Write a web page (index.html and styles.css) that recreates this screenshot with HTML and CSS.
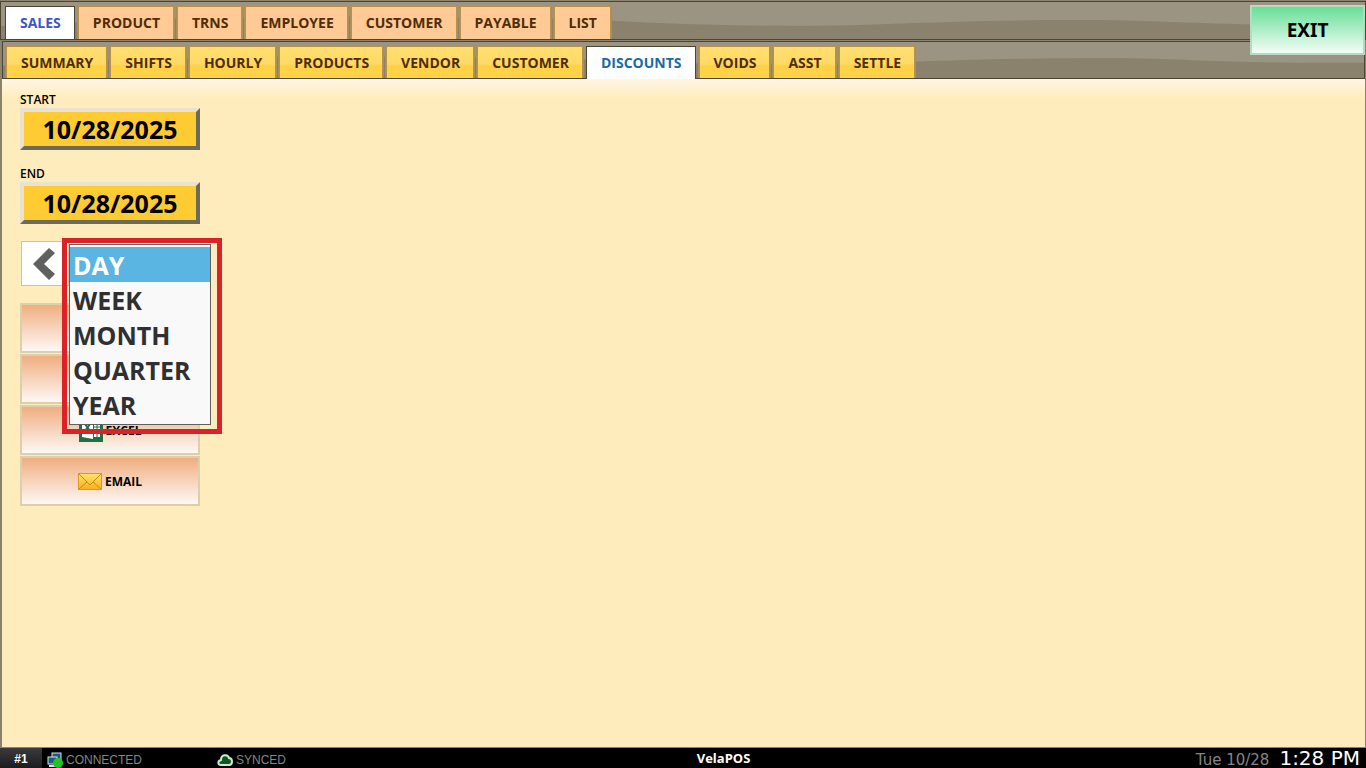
FILE: index.html
```html
<!DOCTYPE html>
<html lang="en">
<head>
    <meta charset="UTF-8">
    <meta name="viewport" content="width=device-width, initial-scale=1.0">
    <title>VelaPOS - Discounts</title>
    <link rel="stylesheet" href="styles.css">
</head>
<body>
    <header class="header">
        <nav class="tab-bar main-tabs">
            <svg class="wave" viewBox="0 0 1366 40" preserveAspectRatio="none" aria-hidden="true">
                <path d="M0 26 C200 14 400 14 608 20 C700 26 800 27 880 24 C980 20 1080 18 1160 21 C1230 24 1300 26 1366 24 V40 H0 Z"/>
            </svg>
            <a href="#" class="tab active">SALES</a>
            <a href="#" class="tab">PRODUCT</a>
            <a href="#" class="tab">TRNS</a>
            <a href="#" class="tab">EMPLOYEE</a>
            <a href="#" class="tab">CUSTOMER</a>
            <a href="#" class="tab">PAYABLE</a>
            <a href="#" class="tab">LIST</a>
        </nav>
        <nav class="tab-bar sub-tabs">
            <svg class="wave" viewBox="0 0 1366 40" preserveAspectRatio="none" aria-hidden="true">
                <path d="M0 26 C200 14 400 14 608 20 C700 26 800 25 914 22 C980 19 1080 17 1140 18 C1200 20 1260 24 1366 23 V40 H0 Z"/>
            </svg>
            <a href="#" class="tab">SUMMARY</a>
            <a href="#" class="tab">SHIFTS</a>
            <a href="#" class="tab">HOURLY</a>
            <a href="#" class="tab">PRODUCTS</a>
            <a href="#" class="tab">VENDOR</a>
            <a href="#" class="tab">CUSTOMER</a>
            <a href="#" class="tab active">DISCOUNTS</a>
            <a href="#" class="tab">VOIDS</a>
            <a href="#" class="tab">ASST</a>
            <a href="#" class="tab">SETTLE</a>
        </nav>
        <button class="exit-button" type="button">EXIT</button>
    </header>

    <main class="content">
        <form class="filters">
            <div class="field">
                <label for="start-date">START</label>
                <input type="text" id="start-date" class="date-input" value="10/28/2025">
            </div>
            <div class="field">
                <label for="end-date">END</label>
                <input type="text" id="end-date" class="date-input" value="10/28/2025">
            </div>

            <div class="period">
                <button class="period-prev" type="button" aria-label="Previous period">
                    <svg width="22" height="32" viewBox="0 0 22 32" aria-hidden="true">
                        <path d="M0 16 L16 0 L22 5 L11 16 L22 26 L16 32 Z" fill="#606060"/>
                    </svg>
                </button>
                <div class="period-menu">
                    <select class="period-list" size="5" aria-label="Period">
                        <option selected>DAY</option>
                        <option>WEEK</option>
                        <option>MONTH</option>
                        <option>QUARTER</option>
                        <option>YEAR</option>
                    </select>
                </div>
            </div>

            <div class="actions">
                <button class="action-button" type="button" aria-label="View"></button>
                <button class="action-button" type="button" aria-label="Print"></button>
                <button class="action-button" type="button">
                    <svg width="24" height="24" viewBox="0 0 24 24" aria-hidden="true">
                        <rect width="24" height="24" fill="#1e7145"/>
                        <path d="M3 5 L14 3 V21 L3 19 Z" fill="#fff"/>
                        <path d="M15 5 H21 V19 H15 Z" fill="#fff"/>
                        <path d="M15 9 H21 M15 12 H21 M15 15 H21 M18 5 V19" stroke="#1e7145"/>
                        <path d="M6 6 L11 13 M11 6 L6 13" stroke="#1e7145" stroke-width="2"/>
                    </svg>
                    EXCEL
                </button>
                <button class="action-button" type="button">
                    <svg width="24" height="17" viewBox="0 0 24 17" aria-hidden="true">
                        <defs>
                            <linearGradient id="mail" x1="0" y1="0" x2="0" y2="1">
                                <stop offset="0" stop-color="#ffe36a"/>
                                <stop offset="1" stop-color="#f9b01c"/>
                            </linearGradient>
                        </defs>
                        <rect x="0.5" y="0.5" width="23" height="16" fill="url(#mail)" stroke="#d99a22"/>
                        <path d="M1 1 L12 12 L23 1 M1 16 L9 9 M23 16 L15 9" fill="none" stroke="#c98a18"/>
                    </svg>
                    EMAIL
                </button>
            </div>
        </form>
    </main>

    <footer class="status-bar">
        <div class="status-left">
            <span class="station">#1</span>
            <span class="status connection">
                <svg width="16" height="16" viewBox="0 0 16 16" aria-hidden="true">
                    <rect x="5" y="1" width="9" height="7" fill="#1d5a7c" stroke="#d5e6ee"/>
                    <rect x="1" y="5" width="9" height="7" fill="#1d5a7c" stroke="#d5e6ee"/>
                    <path d="M2 14 H9" stroke="#d5e6ee" stroke-width="2"/>
                    <circle cx="11" cy="11" r="5" fill="#22c322"/>
                </svg>
                CONNECTED
            </span>
            <span class="status">
                <svg width="16" height="12" viewBox="0 0 16 12" aria-hidden="true">
                    <path d="M4 11 C1 11 0 7 4 6 C4 0 11 0 12 4 C16 4 16 11 12 11 Z" fill="#0c5a1c" stroke="#cfe8d0" stroke-width="2"/>
                </svg>
                SYNCED
            </span>
        </div>
        <div class="brand">VelaPOS</div>
        <div class="clock">
            <span class="date">Tue 10/28</span>
            <span class="time">1:28 PM</span>
        </div>
    </footer>
</body>
</html>
```

FILE: styles.css
```css
* {
    margin: 0;
    padding: 0;
    box-sizing: border-box;
}

body {
    display: flex;
    flex-direction: column;
    min-height: 100vh;
    font-family: 'Open Sans', sans-serif;
    background: #feecbc;
    color: #000;
}

/* Tabs */
.header {
    position: relative;
    z-index: 1;
    padding-top: 1px;
    background: #8d8470;
}

.tab-bar {
    position: relative;
    display: flex;
    gap: 3px;
    height: 39px;
    padding: 4px 4px 0;
    border: 1px solid #4c4534;
    background: #9c9482;
}

.sub-tabs {
    height: 38px;
    margin: 1px 1px 0 2px;
    padding-left: 3px;
}

.wave {
    position: absolute;
    inset: 0;
    width: 100%;
    height: 100%;
    fill: #8b826e;
}

.tab {
    position: relative;
    display: flex;
    align-items: center;
    padding: 0 13px 0 14px;
    border: 1px solid #b8924a;
    border-bottom: none;
    box-shadow: 1px 0 #a8905a, -1px 0 #a8905a;
    font-size: 14px;
    font-weight: 700;
    color: #4f2d06;
    text-decoration: none;
}

.main-tabs .tab {
    padding-bottom: 1px;
    background: #ffca95;
}

.sub-tabs .tab {
    background: linear-gradient(#ffdf6f 0%, #ffd966 55%, #ffd145 60%, #ffd34a 100%);
}

.main-tabs .tab.active,
.sub-tabs .tab.active {
    background: #fff;
    border-color: #4c4534;
    box-shadow: none;
    color: #1a6aa5;
}

.main-tabs .tab.active {
    color: #3d55c8;
}

.sub-tabs .tab.active {
    margin-bottom: -1px;
    padding-bottom: 1px;
}

.exit-button {
    position: absolute;
    top: 5px;
    right: 1px;
    width: 115px;
    height: 50px;
    border: 2px solid #b5dcc0;
    background: linear-gradient(#68de98, #f4fdf6);
    font: 700 19px 'Noto Sans', sans-serif;
    color: #000;
    cursor: pointer;
}

/* Report filters */
.content {
    flex: 1;
    padding: 13px 18px;
    border: solid #8b826e;
    border-width: 0 1px 1px 2px;
    background: linear-gradient(#fff6e2, #feecbc 20px);
}

.filters {
    width: 180px;
}

.field {
    display: flex;
    flex-direction: column;
    margin-bottom: 16px;
}

.field label {
    height: 16px;
    font-size: 12px;
    font-weight: 600;
    line-height: 16px;
}

.date-input {
    width: 100%;
    height: 42px;
    border: 4px solid;
    border-color: #e9e2d2 #6e6a58 #6e6a58 #e9e2d2;
    background: #ffcb32;
    font: 700 25px 'Open Sans', sans-serif;
    text-align: center;
    color: #000;
}

.period {
    position: relative;
    height: 45px;
    margin: 17px 0 17px 1px;
}

.period-prev {
    display: flex;
    align-items: center;
    width: 48px;
    height: 45px;
    padding-left: 11px;
    border: 1px solid #c9c2ae;
    background: #fff;
}

.period-menu {
    position: absolute;
    top: -3px;
    left: 41px;
    z-index: 1;
    padding: 1px 6px 4px 2px;
    border: 5px solid #d92329;
}

.period-list {
    display: block;
    width: 142px;
    height: 181px;
    padding: 2px 0;
    border: 1px solid #606060;
    border-radius: 0;
    outline: none;
    background: #f9f9f9;
    font: 700 25px 'Open Sans', sans-serif;
    color: #303030;
    overflow: hidden;
}

.period-list option {
    height: 35px;
    min-height: 35px;
    padding: 1px 3px 0;
    font-weight: 700;
    line-height: 34px;
}

.period-list option:checked {
    background: #5bb5e2 linear-gradient(#5bb5e2, #5bb5e2);
    color: #fff;
}

.actions {
    display: flex;
    flex-direction: column;
    gap: 1px;
}

.action-button {
    display: flex;
    align-items: center;
    justify-content: center;
    gap: 3px;
    height: 50px;
    border: 2px solid #dccfac;
    background: linear-gradient(#f0ae80, #fdf8f4);
    font: 700 12px 'Open Sans', sans-serif;
    color: #000;
    cursor: pointer;
}

/* Status bar */
.status-bar {
    display: flex;
    height: 20px;
    background: #000;
    color: #858585;
    line-height: 20px;
}

.status-left,
.clock {
    display: flex;
}

.status-left {
    flex: 8 1 0;
}

.station {
    width: 42px;
    margin-right: 5px;
    background: linear-gradient(#3a3a3e, #1c1c1e);
    font: 700 12px/22px 'Liberation Sans', sans-serif;
    text-align: center;
    color: #fff;
}

.status {
    display: flex;
    align-items: center;
    gap: 3px;
    padding-top: 3px;
    font: 12px/16px 'Liberation Sans', sans-serif;
}

.connection {
    width: 170px;
}

.brand {
    font-size: 13px;
    font-weight: 700;
    color: #fff;
}

.clock {
    flex: 7 1 0;
    justify-content: flex-end;
    align-items: baseline;
    gap: 10px;
    padding-right: 6px;
    font-family: 'DejaVu Sans', sans-serif;
}

.date {
    font-size: 15px;
}

.time {
    font-size: 20px;
    color: #fff;
}
```
